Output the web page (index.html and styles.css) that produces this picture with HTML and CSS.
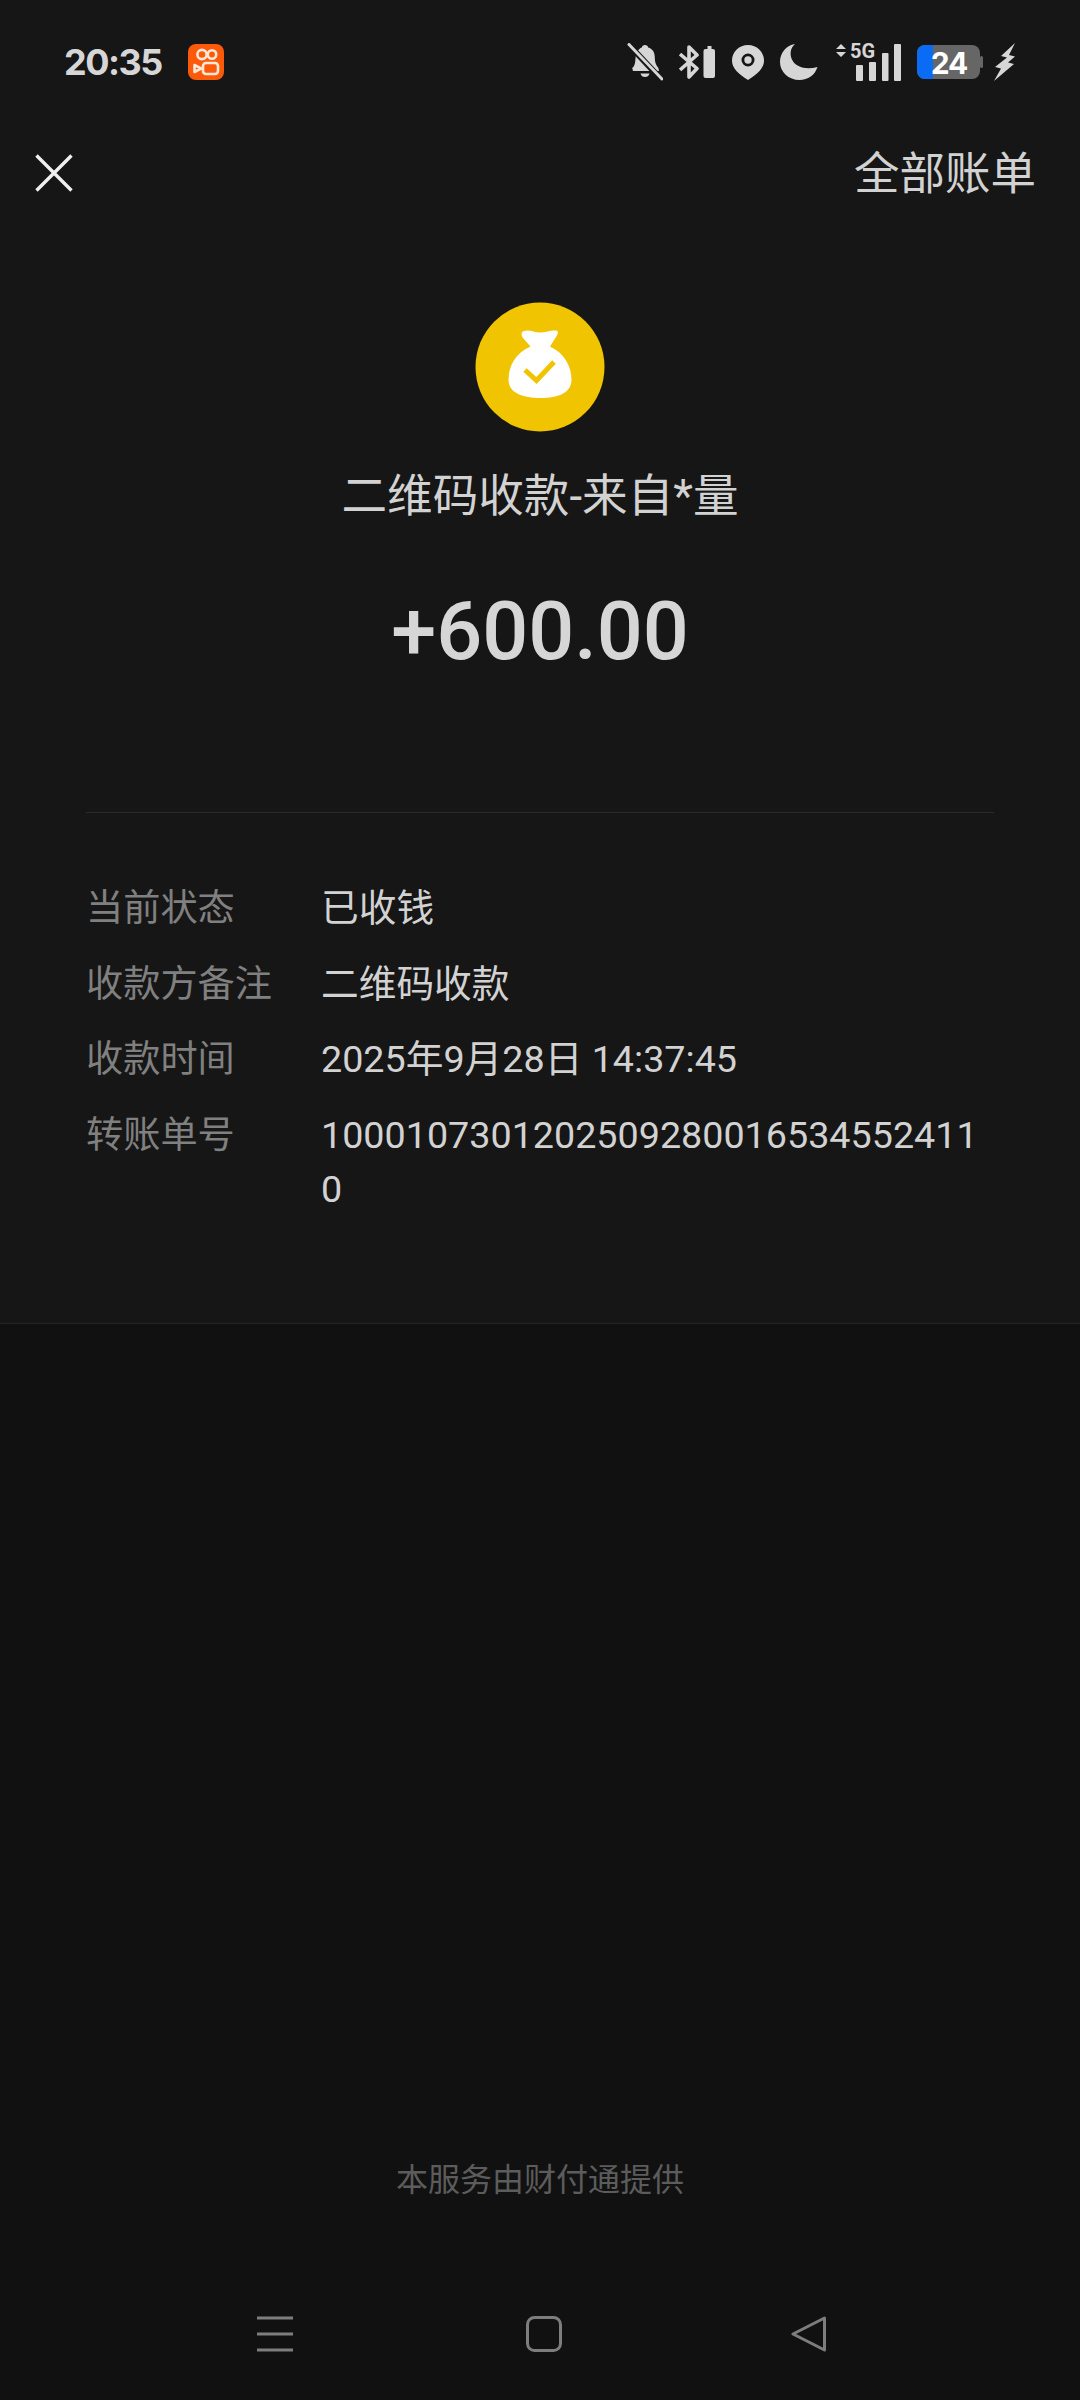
FILE: index.html
```html
<!doctype html>
<html lang="zh">
<head>
<meta charset="utf-8">
<title>账单详情</title>
<link rel="stylesheet" href="styles.css">
</head>
<body>
<div class="page">
	<div class="card">
		<div class="status">
			<div class="status-left">
				<span class="clock">20:35</span>
				<svg class="app-icon" width="36" height="36" viewBox="0 0 36 36">
					<rect width="36" height="36" rx="8" fill="#fb5a0a"/>
					<g fill="none" stroke="#fde8d8" stroke-width="2.6" stroke-linejoin="round">
						<circle cx="14" cy="10.5" r="4.6"/>
						<circle cx="24" cy="10.5" r="4.2"/>
						<rect x="15" y="19" width="15" height="11" rx="3"/>
						<path d="M6.5 21 13 24.5 6.5 28z"/>
					</g>
				</svg>
			</div>
			<div class="status-right">
				<svg width="36" height="38" viewBox="0 0 36 38">
					<path fill="#d6d6d6" d="M18 2c1.700 0 3 1.200 3.200 2.600 4.600 1.300 6.600 5 6.600 10 0 4.500 1 7.600 3.600 10.400l.6 3H6l-.8-3c2.500-1.600 3-5 3.300-9.500.2-5.500 3-9.600 6.300-10.900C15 3.200 16.300 2 18 2z"/>
					<path fill="#d6d6d6" d="M13.500 30.500h9c-.6 2.500-2.300 3.500-4.500 3.500s-3.900-1-4.500-3.500z"/>
					<path stroke="#161616" stroke-width="6" d="M3 3l30 32"/>
					<path stroke="#d6d6d6" stroke-width="3" stroke-linecap="round" d="M2 1.500l33 34.500"/>
				</svg>
				<svg width="36" height="36" viewBox="0 0 36 36">
					<path fill="none" stroke="#d6d6d6" stroke-width="3.600" stroke-linejoin="round" d="M1 10 18 24.500 10 33V3L18 11 1 26"/>
					<path fill="#d6d6d6" d="M24.500 7a2 2 0 0 1 2-2h2V2h4v3h1.500a2 2 0 0 1 2 2v25a2 2 0 0 1-2 2h-7.500a2 2 0 0 1-2-2z"/>
				</svg>
				<svg width="32" height="36" viewBox="0 0 32 36">
					<path fill="#d6d6d6" fill-rule="evenodd" d="M16 1c8.800 0 16 6.800 16 15.500 0 8-6.500 13.500-16 19.500C6.500 30 0 24.500 0 16.500 0 7.800 7.200 1 16 1zm0 8.500a6.500 6.500 0 1 0 0 13 6.500 6.500 0 0 0 0-13zm0 2.800a3.700 3.700 0 1 1 0 7.400 3.700 3.700 0 0 1 0-7.400z"/>
				</svg>
				<svg width="38" height="36" viewBox="0 0 38 36">
					<path fill="#d6d6d6" d="M15 0C10 4 9.500 11 12.500 16.500c3.500 6.500 13 9.500 25 6.500-2.500 8-9.500 13-18 13C8.500 36 0 28 0 18 0 8.500 6.500 1.500 15 0z"/>
				</svg>
				<svg width="66" height="50" viewBox="0 -6 66 50">
					<path fill="#d6d6d6" d="M6 1l5 5H1zM6 14l5-5H1z"/>
					<text x="15" y="15" class="net">5G</text>
					<g fill="#d6d6d6">
						<rect x="21" y="22" width="7" height="16" rx="1"/>
						<rect x="34" y="19" width="7" height="19" rx="1"/>
						<rect x="47" y="10" width="6.500" height="28" rx="1"/>
						<rect x="59" y="1" width="7" height="37" rx="1"/>
					</g>
				</svg>
				<svg width="66" height="36" viewBox="0 0 66 36">
					<rect x="0" y="1" width="63" height="34" rx="8" fill="#666"/>
					<path fill="#0a6cf5" d="M8 1h8v34H8a8 8 0 0 1-8-8V9a8 8 0 0 1 8-8z"/>
					<rect x="63" y="12" width="3" height="12" rx="1.500" fill="#666"/>
					<text x="32" y="30" class="batt">24</text>
				</svg>
				<svg class="bolt" width="22" height="38" viewBox="0 0 22 38">
					<path fill="#d6d6d6" d="M21 0 7 13l6 1.500L1 24l6 1.500L0 38 20 21l-6-1.500 7-6-6-1.500z"/>
				</svg>
			</div>
		</div>

		<div class="topbar">
			<svg class="close" width="38" height="38" viewBox="0 0 38 38">
				<path stroke="#efefef" stroke-width="3.400" d="M1.500 1.500l35 35M36.500 1.500l-35 35"/>
			</svg>
			<span class="all-bills">全部账单</span>
		</div>

		<div class="hero">
			<svg class="hero-icon" width="130" height="130" viewBox="0 0 130 130">
				<circle cx="65" cy="65" r="64.500" fill="#f0c400"/>
				<path fill="#fff" d="M49 29c5-2 10 1.500 16 1.500S76 28 81 28.500c3 .5 2 3.500 0 6.500l-6 9.500c15 7 21.500 20.500 21.500 33 0 14-14 18.500-31 18.500s-32-4.500-32-18.500c0-13 7-26.500 22-33L48 36c-2-3-2-6 1-7z"/>
				<path fill="none" stroke="#f0c400" stroke-width="5" d="M50 68l11.500 10.500L79 60"/>
			</svg>
			<div class="hero-title">二维码收款-来自*量</div>
			<div class="amount">+600.00</div>
		</div>

		<div class="details">
			<div class="row">
				<div class="row-label">当前状态</div>
				<div class="row-value">已收钱</div>
			</div>
			<div class="row">
				<div class="row-label">收款方备注</div>
				<div class="row-value">二维码收款</div>
			</div>
			<div class="row">
				<div class="row-label">收款时间</div>
				<div class="row-value">2025年9月28日 14:37:45</div>
			</div>
			<div class="row">
				<div class="row-label">转账单号</div>
				<div class="row-value">10001073012025092800165345524110</div>
			</div>
		</div>
	</div>

	<div class="bottom">
		<div class="provider">本服务由财付通提供</div>
		<div class="navbar">
			<svg width="36" height="36" viewBox="0 0 36 36">
				<path stroke="#7d7d7d" stroke-width="3" d="M0 2h36M0 18h36M0 34h36"/>
			</svg>
			<svg class="nav-home" width="36" height="36" viewBox="0 0 36 36">
				<rect x="1.500" y="1.500" width="33" height="33" rx="7" fill="none" stroke="#7d7d7d" stroke-width="3"/>
			</svg>
			<svg width="36" height="36" viewBox="0 0 36 36">
				<path fill="none" stroke="#7d7d7d" stroke-width="3" stroke-linejoin="round" d="M33.500 2 2 18l31.500 16z"/>
			</svg>
		</div>
	</div>
</div>
</body>
</html>
```

FILE: styles.css
```css
*{ margin:0; padding:0; box-sizing:border-box; }
html,body{
	width:1080px;
	height:2400px;
	background:#111;
	overflow:hidden;
}
body{
	font-family:Roboto,"Noto Sans CJK SC",sans-serif;
	color:#d6d6d6;
}
svg{ display:block; flex:none; }
.page{
	height:2400px;
	display:flex;
	flex-direction:column;
}

/* upper card */
.card{
	height:1324px;
	background:#161616;
	border-bottom:1px solid #232323;
}
.status{
	height:124px;
	padding:0 64px;
	display:flex;
	justify-content:space-between;
	align-items:center;
}
.status-left{
	display:flex;
	align-items:center;
	gap:26px;
}
.clock{
	font-family:Inter,sans-serif;
	font-size:36px;
	font-weight:700;
	width:98px;
	letter-spacing:-1.5px;
}
.status-right{
	display:flex;
	align-items:center;
	gap:16.5px;
}
.bolt{ margin-left:-5.5px; }
.net{
	font-family:Roboto,sans-serif;
	font-size:20px;
	font-weight:700;
	fill:#d6d6d6;
}
.batt{
	font-family:Inter,sans-serif;
	font-size:30px;
	font-weight:700;
	letter-spacing:-1px;
	fill:#fff;
	text-anchor:middle;
}

.topbar{
	height:94px;
	padding:0 44px 2px 35px;
	display:flex;
	justify-content:space-between;
	align-items:center;
}
.close{ margin-top:5px; }
.all-bills{
	font-size:45.5px;
	color:#d2d2d2;
}

.hero{
	margin:0 86px;
	padding-top:84px;
	height:595px;
	display:flex;
	flex-direction:column;
	align-items:center;
	border-bottom:1px solid #2b2b2b;
}
.hero-title{
	margin-top:35px;
	font-size:45.6px;
	line-height:60px;
	color:#d2d2d2;
}
.amount{
	margin-top:57px;
	font-size:81px;
	font-weight:500;
	line-height:96px;
	color:#d6d6d6;
}

.details{
	padding:68px 86px 0;
}
.row{
	display:flex;
	margin-bottom:21.5px;
	font-size:37.2px;
	line-height:54px;
}
.row-label{
	width:235px;
	flex:none;
	color:#808080;
}
.row-value{
	width:671px;
	font-size:37.7px;
	word-break:break-all;
	color:#d2d2d2;
}

/* lower part */
.bottom{
	flex:1;
	display:flex;
	flex-direction:column;
	align-items:center;
}
.provider{
	margin-top:831px;
	font-size:32px;
	line-height:50px;
	color:#5c5c5c;
}
.navbar{
	margin:111px 0 0 4px;
	display:flex;
	gap:229px;
	align-items:center;
}
.nav-home{ margin-left:4px; }
```
